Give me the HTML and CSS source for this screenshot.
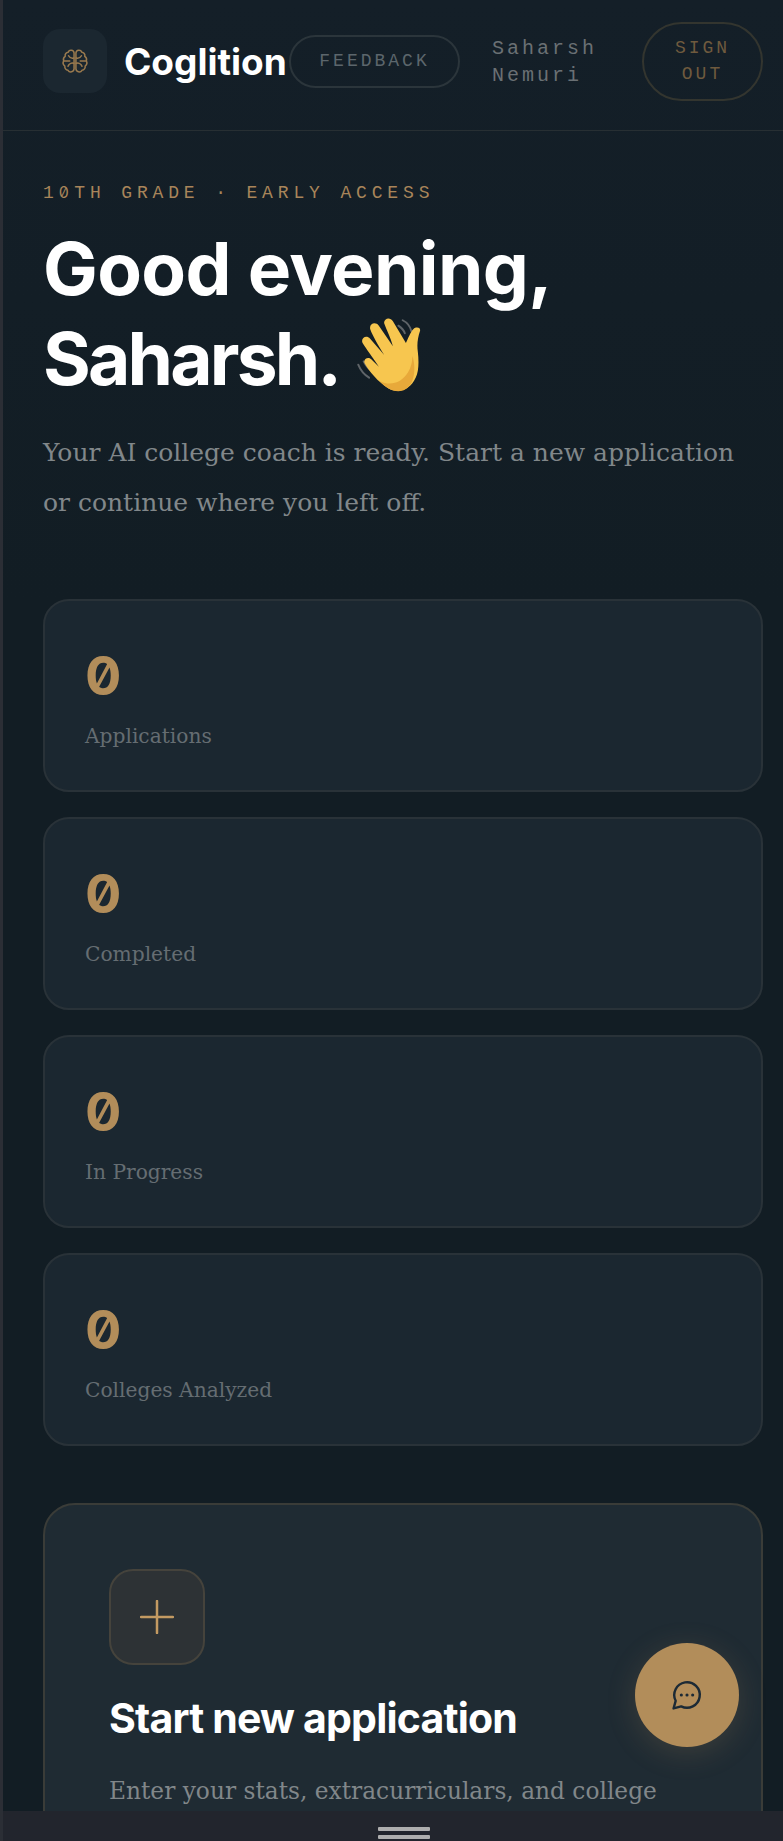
FILE: index.html
```html
<!DOCTYPE html>
<html lang="en">

<head>
    <meta charset="UTF-8">
    <meta name="viewport" content="width=device-width, initial-scale=1.0">
    <title>Coglition</title>
    <link rel="stylesheet" href="styles.css">
</head>

<body>
    <div class="page">
        <header class="topbar">
            <div class="brand">
                <div class="logo">
                    <svg width="28" height="28" viewBox="0 0 24 24" fill="none" stroke="#9a7a4e" stroke-width="1.300" stroke-linecap="round" stroke-linejoin="round">
                        <path d="M11.200 5a2.600 2.600 0 0 0-5-.6A3 3 0 0 0 3.600 8a3.400 3.400 0 0 0-1.300 3.900 3.400 3.400 0 0 0 1 4.400A3.200 3.200 0 0 0 6 20a2.800 2.800 0 0 0 5.200-1.200Z" />
                        <path d="M12.800 5a2.600 2.600 0 0 1 5-.6A3 3 0 0 1 20.400 8a3.400 3.400 0 0 1 1.300 3.900 3.400 3.400 0 0 1-1 4.400A3.200 3.200 0 0 1 18 20a2.800 2.800 0 0 1-5.200-1.200Z" />
                        <path d="M11 9.500A4 4 0 0 1 6.500 7.500M11 14a4 4 0 0 0-5 2.500M3 12h4.500" />
                        <path d="M13 9.500a4 4 0 0 0 4.500-2M13 14a4 4 0 0 1 5 2.500M21 12h-4.500" />
                    </svg>
                </div>
                <span class="brand-name">Coglition</span>
            </div>
            <a class="pill feedback">FEEDBACK</a>
            <span class="username">Saharsh Nemuri</span>
            <a class="pill signout">SIGN OUT</a>
        </header>

        <main class="content">
            <section class="hero">
                <div class="eyebrow">1<span class="slash">0</span>TH GRADE · EARLY ACCESS</div>
                <h1>Good evening,<br><span class="name">Saharsh.</span>
                    <svg class="wave" width="80" height="78" viewBox="0 0 70 72" fill="none">
                        <path d="M43 3c4 2 7 6 8 10M39 8c3 2 5 4 6 7M2 44c2 5 5 9 10 12M7 41c2 4 4 7 8 9" stroke="#5f6468" stroke-width="1.800" stroke-linecap="round" />
                        <path d="M30 66C20 60 12 50 8 43c-2-4 3-7 6-4l7 7c-5-8-12-17-15-22-2-4 3-8 7-4l13 15C21 27 15 17 13 11c-1-5 5-7 8-3l13 19c-2-8-6-15-8-21-1-4 5-7 8-2l12 20c2-4 4-10 7-13 2-2 7-2 6 2-2 6-3 12-2 19 1 9 1 18-2 24-5 11-16 15-25 10Z" fill="#f7c64f" />
                        <path d="M30 66c-3-2-6-4-8-7 9 5 20 2 26-8 3-5 4-10 4-15 3 9 2 19-1 25-5 9-14 9-21 5Z" fill="#e8a93a" />
                    </svg>
                </h1>
                <p class="lead">Your AI college coach is ready. Start a new application or continue where you left off.</p>
            </section>

            <section class="stats">
                <div class="stat">
                    <div class="stat-num">0</div>
                    <div class="stat-label">Applications</div>
                </div>
                <div class="stat">
                    <div class="stat-num">0</div>
                    <div class="stat-label">Completed</div>
                </div>
                <div class="stat">
                    <div class="stat-num">0</div>
                    <div class="stat-label">In Progress</div>
                </div>
                <div class="stat">
                    <div class="stat-num">0</div>
                    <div class="stat-label">Colleges Analyzed</div>
                </div>
            </section>

            <section class="new-app">
                <div class="plus-box">
                    <svg width="34" height="34" viewBox="0 0 34 34" fill="none" stroke="#c39a62" stroke-width="2.500" stroke-linecap="round">
                        <path d="M17 1v32M1 17h32" />
                    </svg>
                </div>
                <h2>Start new application</h2>
                <p>Enter your stats, extracurriculars, and college</p>
            </section>
        </main>

        <button class="fab">
            <svg width="34" height="34" viewBox="0 0 24 24" fill="none" stroke="#1c2a35" stroke-width="1.700" stroke-linecap="round" stroke-linejoin="round">
                <path d="M7.900 20A9 9 0 1 0 4 16.100L2.500 21.500Z" />
                <path d="M8 12h.01M12 12h.01M16 12h.01" stroke-width="2.200" />
            </svg>
        </button>

        <div class="bottom-bar">
            <div class="handle"></div>
            <div class="handle"></div>
        </div>
    </div>
</body>

</html>
```

FILE: styles.css
```css
* {
    box-sizing: border-box;
}

html,
body {
    margin: 0;
    padding: 0;
    background-color: #131e26;
}

.page {
    position: relative;
    width: 783px;
    height: 1841px;
    overflow: hidden;
    border-left: 3px solid #2b2e35;
    background: linear-gradient(180deg, #141f28 0, #121d24 600px, #121d24 100%);
}

.topbar {
    height: 131px;
    display: flex;
    align-items: center;
    padding: 0 20px 8px 40px;
    border-bottom: 1px solid #272f33;
}

.brand {
    display: flex;
    align-items: center;
    gap: 17px;
    width: 246px;
    flex-shrink: 0;
}

.logo {
    width: 64px;
    height: 64px;
    border-radius: 17px;
    background-color: #1b2730;
    display: flex;
    align-items: center;
    justify-content: center;
    flex-shrink: 0;
}

.brand-name {
    font-family: "Inter", sans-serif;
    font-size: 37px;
    font-weight: 700;
    color: #fff;
}

.pill {
    font-family: "Liberation Mono", monospace;
    font-size: 18px;
    letter-spacing: 3px;
    text-align: center;
    border-radius: 40px;
    flex-shrink: 0;
}

.feedback {
    width: 171px;
    height: 53px;
    line-height: 49px;
    border: 2px solid #2b353b;
    color: #5c666c;
}

.username {
    width: 118px;
    margin: 2px 32px 0;
    flex-shrink: 0;
    font-family: "Liberation Mono", monospace;
    font-size: 20px;
    line-height: 27px;
    letter-spacing: 3px;
    color: #6a7074;
}

.signout {
    width: 121px;
    height: 79px;
    padding: 0 30px;
    line-height: 26px;
    display: flex;
    align-items: center;
    border: 2px solid #33352f;
    color: #6f5a3e;
}

.content {
    padding: 47px 20px 0 40px;
}

.eyebrow {
    font-family: "Liberation Mono", monospace;
    font-size: 18px;
    line-height: 28px;
    letter-spacing: 4.850px;
    color: #a8855a;
}

.slash {
    display: inline-block;
    width: 10.800px;
    margin-right: 4.850px;
    font-family: "Inter", sans-serif;
    font-size: 16px;
    font-variant-numeric: slashed-zero;
    letter-spacing: 0;
}

h1 {
    margin: 17px 0 0;
    font-family: "Inter", sans-serif;
    font-size: 73px;
    font-weight: 700;
    line-height: 90px;
    letter-spacing: -0.600px;
    color: #fff;
}

.name {
    letter-spacing: -2.800px;
}

.wave {
    margin-left: -2px;
    vertical-align: -10px;
}

.lead {
    margin: 24px 0 0;
    font-family: "DejaVu Serif", serif;
    font-size: 25px;
    line-height: 50px;
    color: #81878a;
}

.stats {
    margin-top: 71px;
    display: flex;
    flex-direction: column;
    gap: 25px;
}

.stat {
    height: 193px;
    padding: 45px 40px 0;
    background-color: #1b2730;
    border: 2px solid #293238;
    border-radius: 26px;
}

.stat-num {
    font-family: "Inter", sans-serif;
    font-size: 54px;
    font-weight: 700;
    font-variant-numeric: slashed-zero;
    line-height: 60px;
    color: #b28d5a;
}

.stat-label {
    margin-top: 16px;
    font-family: "DejaVu Serif", serif;
    font-size: 20.200px;
    line-height: 28px;
    color: #656d72;
}

.new-app {
    margin-top: 57px;
    height: 500px;
    padding: 64px 64px 0;
    background-color: #1f2b33;
    border: 2px solid #3a3c38;
    border-radius: 32px;
}

.plus-box {
    width: 96px;
    height: 96px;
    border-radius: 24px;
    background-color: #2d3235;
    border: 2px solid #45433c;
    display: flex;
    align-items: center;
    justify-content: center;
}

h2 {
    margin: 27px 0 0;
    font-family: "Inter", sans-serif;
    font-size: 41px;
    font-weight: 700;
    line-height: 52px;
    letter-spacing: -0.800px;
    color: #fff;
}

.new-app p {
    margin: 24px 0 0;
    font-family: "DejaVu Serif", serif;
    font-size: 23.300px;
    line-height: 46px;
    color: #81878a;
}

.fab {
    position: absolute;
    left: 632px;
    top: 1643px;
    width: 104px;
    height: 104px;
    padding: 0;
    border: none;
    border-radius: 50%;
    background-color: #b28d5a;
    box-shadow: 0 6px 30px rgba(178, 141, 90, 0.2);
    display: flex;
    align-items: center;
    justify-content: center;
}

.bottom-bar {
    position: absolute;
    left: -3px;
    right: 0;
    bottom: 0;
    height: 30px;
    background-color: #22252d;
    display: flex;
    flex-direction: column;
    align-items: center;
    justify-content: flex-end;
    gap: 4px;
    padding: 0 0 2px 24px;
}

.handle {
    width: 52px;
    height: 4px;
    border-radius: 1px;
    background-color: #aeaeae;
}
```
